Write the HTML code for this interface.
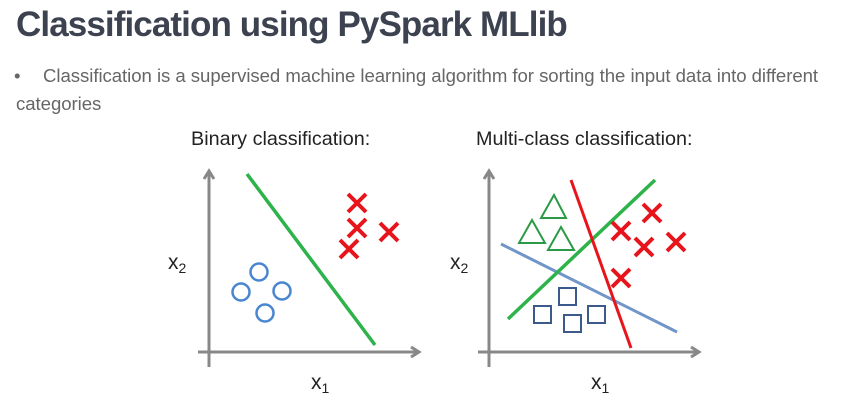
<!DOCTYPE html>
<html><head><meta charset="utf-8"><style>
html,body{margin:0;padding:0;background:#fff;width:857px;height:415px;overflow:hidden}
h1{position:absolute;left:16px;top:5px;margin:0;font:bold 35px "Liberation Sans",sans-serif;color:#3d4250;letter-spacing:-0.9px;white-space:nowrap}
.t{position:absolute;font:18.6px "Liberation Sans",sans-serif;color:#666;white-space:nowrap;letter-spacing:-0.05px}
svg{position:absolute;left:0;top:0}
</style></head><body>
<h1>Classification using PySpark MLlib</h1>
<div class="t" style="left:14px;top:65px">•</div>
<div class="t" style="left:43px;top:65px">Classification is a supervised machine learning algorithm for sorting the input data into different</div>
<div class="t" style="left:16px;top:93px">categories</div>
<svg width="857" height="415" font-family="Liberation Sans,sans-serif">
<text x="191" y="145" font-size="19.8" fill="#222">Binary classification:</text>
<text x="476" y="145" font-size="19.8" fill="#222">Multi-class classification:</text>
<g stroke="#888" stroke-width="3" fill="none">
<path d="M209,367 V172 M204,179 L209,171 L214,179"/>
<path d="M198,352 H418 M411,347 L419,352 L411,357"/>
<path d="M489,367 V172 M484,179 L489,171 L494,179"/>
<path d="M478,352 H698 M691,347 L699,352 L691,357"/>
</g>
<g font-size="21" fill="#222">
<text x="168" y="269">x<tspan font-size="14" dy="4">2</tspan></text>
<text x="311" y="389">x<tspan font-size="14" dy="4">1</tspan></text>
<text x="450" y="269">x<tspan font-size="14" dy="4">2</tspan></text>
<text x="591" y="389">x<tspan font-size="14" dy="4">1</tspan></text>
</g>
<line x1="247" y1="174" x2="375" y2="345" stroke="#2db34a" stroke-width="3.5"/>
<g stroke="#e8141c" stroke-width="4">
<path d="M348,194 l18,18 m0,-18 l-18,18"/>
<path d="M348,219 l18,18 m0,-18 l-18,18"/>
<path d="M380,223 l18,18 m0,-18 l-18,18"/>
<path d="M340,240 l18,18 m0,-18 l-18,18"/>
</g>
<g stroke="#4a86d0" stroke-width="2.5" fill="none">
<circle cx="259" cy="272" r="8.5"/><circle cx="241" cy="292" r="8.5"/><circle cx="282" cy="291" r="8.5"/><circle cx="265" cy="313" r="8.5"/>
</g>
<line x1="501" y1="244" x2="677" y2="332" stroke="#6f95c9" stroke-width="3"/>
<line x1="508" y1="319" x2="655" y2="180" stroke="#2db34a" stroke-width="3.5"/>
<line x1="571" y1="180" x2="631" y2="348" stroke="#e8141c" stroke-width="3"/>
<g stroke="#2a9a46" stroke-width="2" fill="none">
<path d="M554,195 L566,218 L541,218 Z"/><path d="M532,220 L545,243 L519,243 Z"/><path d="M561,227 L574,250 L548,250 Z"/>
</g>
<g stroke="#e8141c" stroke-width="4">
<path d="M612,222 l18,18 m0,-18 l-18,18"/>
<path d="M643,204 l18,18 m0,-18 l-18,18"/>
<path d="M635,238 l18,18 m0,-18 l-18,18"/>
<path d="M667,233 l18,18 m0,-18 l-18,18"/>
<path d="M612,269 l18,18 m0,-18 l-18,18"/>
</g>
<g stroke="#3c5a8c" stroke-width="2" fill="none">
<rect x="559" y="288" width="17" height="17"/><rect x="534" y="306" width="17" height="17"/><rect x="564" y="315" width="17" height="17"/><rect x="588" y="306" width="17" height="17"/>
</g>
</svg>
</body></html>
